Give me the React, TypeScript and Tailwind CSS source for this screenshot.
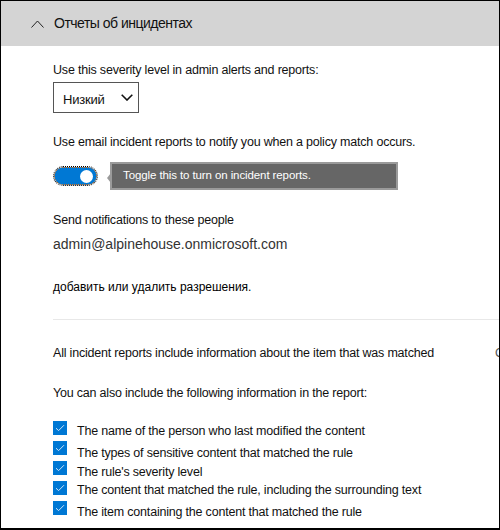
import React from "react"

const items = [
  { label: "The name of the person who last modified the content", pad: "pt-[2px]" },
  { label: "The types of sensitive content that matched the rule", pad: "pt-[4px]" },
  { label: "The rule's severity level", pad: "pt-[3px]" },
  { label: "The content that matched the rule, including the surrounding text", pad: "pt-[1px]" },
  { label: "The item containing the content that matched the rule", pad: "pt-[3px]" },
]

function CheckBox() {
  return (
    <span className="flex h-[14px] w-[14px] shrink-0 items-center justify-center bg-[#0078d4]">
      <svg width="10" height="8" viewBox="0 0 10 8" fill="none">
        <path d="M1 4.2 L3.6 6.6 L9 1.2" stroke="#cfe6fb" strokeWidth="1" />
      </svg>
    </span>
  )
}

export default function App() {
  return (
    <div className="h-[530px] w-[500px] overflow-hidden border-x border-t border-b-2 border-black bg-white font-['Liberation_Sans',Arial,sans-serif] text-[12.5px] tracking-[-0.2px] text-[#111]">
      {/* section header */}
      <div className="flex h-[45px] items-center bg-[#d4d4d4]">
        <svg className="ml-[30px]" width="13" height="8" viewBox="0 0 13 8" fill="none">
          <path d="M0.5 7.5 L6.5 1 L12.5 7.5" stroke="#222" strokeWidth="1" />
        </svg>
        <span className="ml-[10px] text-[14px] tracking-[-0.5px] text-[#111]">Отчеты об инцидентах</span>
      </div>

      <div className="pl-[52px]">
        <div className="mt-[15px] leading-[18px]">Use this severity level in admin alerts and reports:</div>

        <div className="mt-[3px] flex h-[31px] w-[86px] border border-[#555] pl-[9px]">
          <span className="mt-[9px] text-[13px] leading-[16px]">Низкий</span>
          <svg className="ml-[16px] mt-[11px]" width="12" height="7" viewBox="0 0 12 7" fill="none">
            <path d="M0.7 0.7 L6 6 L11.3 0.7" stroke="#111" strokeWidth="1.6" />
          </svg>
        </div>

        <div className="mt-[20px] leading-[18px]">Use email incident reports to notify you when a policy match occurs.</div>

        <div className="mt-[11px] flex h-[28px] items-center">
          <div className="ml-[1px] flex h-[18px] w-[43px] items-center rounded-full border border-dotted border-[#e36c0a] bg-[#0078d4] outline outline-1 outline-dotted outline-black">
            <span className="ml-auto mr-[3px] h-[13px] w-[13px] rounded-full bg-white" />
          </div>
          <div className="relative ml-[13px] flex h-[28px] w-[288px] items-center border-2 border-[#9a9a9a] bg-[#666] pl-[11px] text-[11.5px] tracking-[-0.1px] text-white">
            <span className="absolute -left-[5px] top-[9px] h-0 w-0 border-y-[5px] border-r-[4px] border-y-transparent border-r-[#9a9a9a]" />
            Toggle this to turn on incident reports.
          </div>
        </div>

        <div className="mt-[21px] leading-[18px]">Send notifications to these people</div>
        <div className="mt-[5px] text-[14px] leading-[20px] tracking-normal text-[#333]">admin@alpinehouse.onmicrosoft.com</div>

        <div className="mt-[25px] text-[12px] leading-[16px] tracking-normal text-black">добавить или удалить разрешения.</div>

        <div className="mt-[24px] h-px bg-[#e8e8e8]" />

        <div className="mt-[24px] flex justify-between leading-[18px]">
          <span>All incident reports include information about the item that was matched</span>
          <span className="w-[4px] overflow-hidden text-[#555]">О</span>
        </div>

        <div className="mt-[22px] leading-[18px]">You can also include the following information in the report:</div>

        <div className="mt-[19px] flex flex-col">
          {items.map((it) => (
            <div key={it.label} className="flex h-[20px] items-start">
              <CheckBox />
              <span className={`ml-[10px] leading-[16px] ${it.pad}`}>{it.label}</span>
            </div>
          ))}
        </div>
      </div>
    </div>
  )
}
